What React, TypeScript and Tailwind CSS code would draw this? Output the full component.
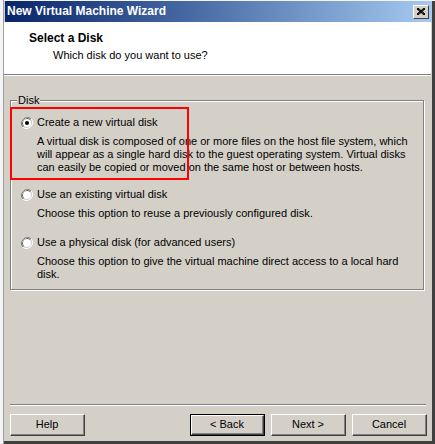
import React from "react";

const font = { fontFamily: '"Liberation Sans", Arial, sans-serif' };

function Radio({ checked = false }: { checked?: boolean }) {
  return (
    <svg width="12" height="12" viewBox="0 0 12 12" className="shrink-0">
      <path d="M10.2 1.8A6 6 0 0 0 1.8 10.2" stroke="#808080" strokeWidth="1" fill="none" />
      <path d="M9.4 2.6A4.9 4.9 0 0 0 2.6 9.4" stroke="#404040" strokeWidth="1" fill="none" />
      <path d="M1.8 10.2A6 6 0 0 0 10.2 1.8" stroke="#ffffff" strokeWidth="1" fill="none" />
      <path d="M2.6 9.4A4.9 4.9 0 0 0 9.4 2.6" stroke="#d4d0c8" strokeWidth="1" fill="none" />
      <circle cx="6" cy="6" r="4" fill="#ffffff" />
      {checked && <circle cx="6" cy="6" r="2" fill="#000000" />}
    </svg>
  );
}

function Option({
  label,
  lines,
  checked,
  className,
}: {
  label: string;
  lines: string[];
  checked?: boolean;
  className?: string;
}) {
  return (
    <div className={`flex flex-col ${className ?? ""}`}>
      <div className="flex items-center gap-[4px] h-[13px]">
        <Radio checked={checked} />
        <span>{label}</span>
      </div>
      <div className="pl-[16px] mt-[6px]">
        {lines.map((l) => (
          <div key={l} className="h-[13px] whitespace-nowrap">
            {l}
          </div>
        ))}
      </div>
    </div>
  );
}

function Button({ label, isDefault }: { label: string; isDefault?: boolean }) {
  return (
    <div className={`w-[75px] h-[22px] ${isDefault ? "border border-black" : ""}`}>
      <div className="h-full border-t border-l border-white border-r border-b border-r-[#404040] border-b-[#404040]">
        <div className="h-full flex items-center justify-center border-r border-b border-r-[#808080] border-b-[#808080] text-black">
          {label}
        </div>
      </div>
    </div>
  );
}

export default function App() {
  return (
    <div
      className="relative w-[435px] h-[444px] flex bg-[#f4f4f4] text-[11px] leading-[13px] text-black overflow-hidden"
      style={font}
    >
      {/* desktop sliver on the left */}
      <div className="w-[4px] border-r border-[#a0a0a0]" />

      {/* window */}
      <div className="flex-1 flex flex-col bg-[#d4d0c8] border-r-[3px] border-b-[3px] border-r-[#404040] border-b-[#404040] mt-[1px]">
        {/* title bar */}
        <div className="h-[21px] flex items-center justify-between pl-[2px] pr-[3px] bg-gradient-to-r from-[#0a246a] to-[#a6caf0] ml-[1px]">
          <span className="text-white font-bold text-[12px]">New Virtual Machine Wizard</span>
          <div className="w-[16px] h-[14px] bg-[#d4d0c8] border-t border-l border-white border-r border-b border-r-[#404040] border-b-[#404040] flex items-center justify-center">
            <svg width="8" height="7" viewBox="0 0 8 7">
              <path d="M0 0L8 7M1 0L8 6M0 1L7 7M8 0L0 7M7 0L0 6M8 1L1 7" stroke="#000" strokeWidth="1" />
            </svg>
          </div>
        </div>

        {/* header */}
        <div className="h-[53px] bg-white border-b border-[#808080] pl-[25px] pt-[10px] mr-[1px]">
          <div className="font-bold text-[12px] leading-[13px]">Select a Disk</div>
          <div className="pl-[24px] mt-[4px]">Which disk do you want to use?</div>
        </div>
        <div className="h-px bg-white mr-[1px]" />

        {/* body */}
        <div className="flex-1 flex flex-col px-[6px]">
          <fieldset className="relative mt-[24px] h-[190px] border border-[#808080] shadow-[inset_1px_1px_0_#fff,1px_1px_0_#fff] mr-[2px] pl-[10px] pt-[15px]">
            <legend className="absolute -top-[7px] left-[6px] px-[1px] bg-[#d4d0c8] leading-[13px]">
              Disk
            </legend>
            <Option
              checked
              label="Create a new virtual disk"
              lines={[
                "A virtual disk is composed of one or more files on the host file system, which",
                "will appear as a single hard disk to the guest operating system. Virtual disks",
                "can easily be copied or moved on the same host or between hosts.",
              ]}
            />
            <Option
              className="mt-[14px]"
              label="Use an existing virtual disk"
              lines={["Choose this option to reuse a previously configured disk."]}
            />
            <Option
              className="mt-[16px]"
              label="Use a physical disk (for advanced users)"
              lines={[
                "Choose this option to give the virtual machine direct access to a local hard",
                "disk.",
              ]}
            />
          </fieldset>

          <div className="mt-[114px] h-px bg-[#808080]" />
          <div className="h-px bg-white" />

          <div className="mt-[8px] flex items-center">
            <Button label="Help" />
            <div className="flex-1" />
            <div className="flex gap-[6px] mr-[-1px]">
              <Button label="< Back" isDefault />
              <Button label="Next >" />
              <Button label="Cancel" />
            </div>
          </div>
        </div>
      </div>

      {/* red highlight drawn over the first option */}
      <div className="absolute left-[10px] top-[107px] w-[179px] h-[73px] border-2 border-[#ff0000] pointer-events-none" />
    </div>
  );
}
